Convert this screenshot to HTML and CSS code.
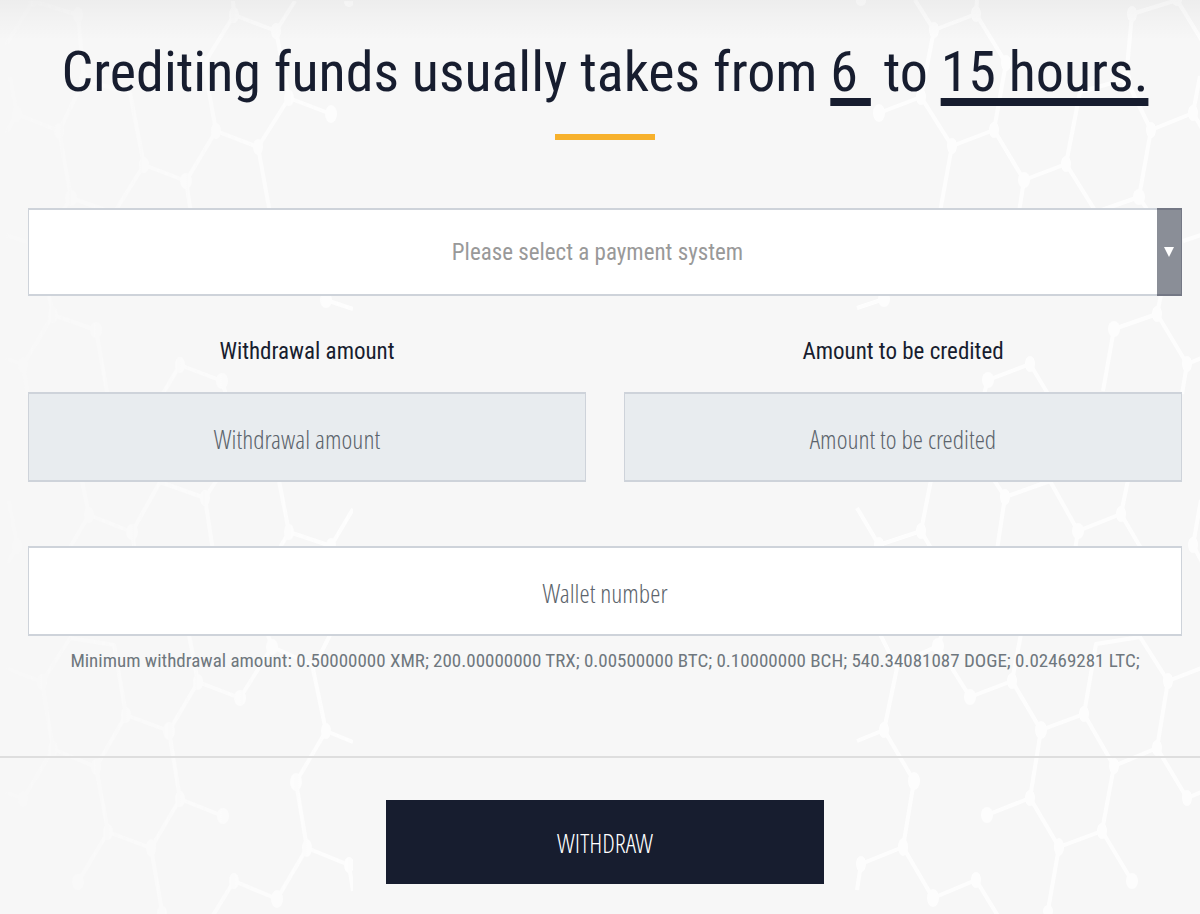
FILE: index.html
```html
<!DOCTYPE html>
<html lang="en">
<head>
<meta charset="utf-8">
<meta name="viewport" content="width=device-width, initial-scale=1">
<title>Withdraw funds</title>
<link rel="stylesheet" href="styles.css">
</head>
<body>
<svg class="backdrop" viewBox="0 0 1200 914" preserveAspectRatio="xMidYMin slice" aria-hidden="true">
  <defs>
    <linearGradient id="fade" x1="857" y1="0" x2="1210" y2="0" gradientUnits="userSpaceOnUse">
      <stop offset="0" stop-color="#fff"/>
      <stop offset="1" stop-color="#fff" stop-opacity="0.1"/>
    </linearGradient>
    <mask id="fade-mask" maskUnits="userSpaceOnUse" x="857" y="0" width="353" height="914">
      <rect x="857" y="0" width="353" height="914" fill="url(#fade)"/>
    </mask>
    <g id="net">
      <path fill="none" stroke="#fff" stroke-width="4" stroke-linejoin="round" d="M915 0L934 30L976 14L977 0M976 14L1006 63L994 130L952 146L921 97L934 30M921 97L879 113M952 146L940 212M994 130L1024 180L1066 164L1080 92L1126 79L1132 14L1177 0L1204 44M1024 180L1019 212M1066 164L1096 212L1139 197L1151 130L1126 79M1151 130L1193 113L1200 76M1193 113L1204 132M1139 197L1150 214M1183 241L1204 234M857 308L884 299M1162 290L1157 314L1114 329L1103 391M1157 314L1187 364L1182 394M1187 364L1204 357M984 394L988 380L1030 364L1048 394M857 508L879 545L921 531L931 480M921 531L932 550M994 480L1005 497L1050 481L1078 531L1121 514L1128 480M1005 497L997 550M1078 531L1075 550M1121 514L1142 550M1201 500L1193 545L1202 562M880 634L897 668L884 730L857 741M884 730L914 781L903 847L861 864L857 890M903 847L933 898L976 880L998 916M897 664L938 646L970 697L1012 681L1021 634M938 646L942 634M1012 681L1041 730L1084 714L1096 644L1140 637L1168 681L1204 667M1041 730L1030 798L987 815M1030 798L1059 847L1102 831L1114 766L1084 714M1114 766L1157 748L1168 681M1157 748L1187 798L1204 791M1059 847L1047 916M1102 831L1132 881"/>
      <g fill="#fff">
        <ellipse cx="861" cy="1" rx="5" ry="5"/><ellipse cx="934" cy="30" rx="5" ry="8"/><ellipse cx="976" cy="14" rx="5" ry="8"/><ellipse cx="1006" cy="63" rx="5" ry="8"/><ellipse cx="921" cy="97" rx="5" ry="8"/><ellipse cx="879" cy="113" rx="6" ry="9"/><ellipse cx="952" cy="146" rx="5" ry="8"/><ellipse cx="994" cy="130" rx="5" ry="8"/><ellipse cx="1024" cy="180" rx="6" ry="8"/><ellipse cx="1066" cy="164" rx="5" ry="8"/><ellipse cx="1126" cy="79" rx="5" ry="8"/><ellipse cx="1132" cy="14" rx="5" ry="8"/><ellipse cx="1177" cy="0" rx="5" ry="6"/><ellipse cx="1151" cy="130" rx="5" ry="8"/><ellipse cx="1193" cy="113" rx="5" ry="8"/><ellipse cx="1139" cy="197" rx="6" ry="8"/>
        <ellipse cx="884" cy="299" rx="6" ry="8"/><ellipse cx="1114" cy="329" rx="6" ry="8"/><ellipse cx="1157" cy="314" rx="5" ry="8"/><ellipse cx="1187" cy="364" rx="5" ry="8"/><ellipse cx="988" cy="380" rx="6" ry="8"/><ellipse cx="1030" cy="364" rx="5" ry="8"/>
        <ellipse cx="879" cy="545" rx="5" ry="8"/><ellipse cx="921" cy="531" rx="5" ry="8"/><ellipse cx="1005" cy="497" rx="5" ry="8"/><ellipse cx="1078" cy="531" rx="6" ry="8"/><ellipse cx="1121" cy="514" rx="5" ry="8"/><ellipse cx="1193" cy="545" rx="5" ry="8"/>
        <ellipse cx="938" cy="646" rx="6" ry="8"/><ellipse cx="970" cy="697" rx="6" ry="8"/><ellipse cx="1012" cy="681" rx="5" ry="8"/><ellipse cx="884" cy="730" rx="5" ry="8"/><ellipse cx="914" cy="781" rx="6" ry="9"/><ellipse cx="903" cy="847" rx="5" ry="9"/><ellipse cx="861" cy="864" rx="5" ry="8"/><ellipse cx="933" cy="898" rx="6" ry="9"/><ellipse cx="976" cy="880" rx="5" ry="8"/><ellipse cx="1041" cy="730" rx="6" ry="9"/><ellipse cx="1084" cy="714" rx="5" ry="8"/><ellipse cx="1168" cy="681" rx="5" ry="8"/><ellipse cx="1114" cy="766" rx="5" ry="8"/><ellipse cx="1157" cy="748" rx="5" ry="8"/><ellipse cx="1030" cy="798" rx="5" ry="8"/><ellipse cx="987" cy="815" rx="6" ry="8"/><ellipse cx="1059" cy="847" rx="5" ry="9"/><ellipse cx="1102" cy="831" rx="5" ry="8"/><ellipse cx="1187" cy="798" rx="5" ry="8"/><ellipse cx="1048" cy="911" rx="5" ry="6"/><ellipse cx="1132" cy="881" rx="6" ry="8"/>
      </g>
    </g>
  </defs>
  <use href="#net" opacity="0.8"/>
  <g transform="matrix(-1 0 0 1 1210 1)" opacity="0.8"><g mask="url(#fade-mask)"><use href="#net"/></g></g>
</svg>
<main class="page">
  <form class="withdraw">
    <div class="body">
      <h1 class="title">Crediting funds usually takes from <u>6&nbsp;</u> to <u>15 hours.</u></h1>
      <div class="accent"></div>
      <div class="select-box">
        <select class="control select" aria-label="Payment system">
          <option>Please select a payment system</option>
        </select>
        <span class="arrow"><svg viewBox="0 0 10 10" width="10" height="10" aria-hidden="true"><path d="M0 0H10L5 10Z" fill="#fff"/></svg></span>
      </div>
      <div class="amounts">
        <div class="field">
          <label class="label" for="amount">Withdrawal amount</label>
          <input class="control amount" id="amount" type="text" placeholder="Withdrawal amount" readonly>
        </div>
        <div class="field">
          <label class="label" for="credited">Amount to be credited</label>
          <input class="control credited" id="credited" type="text" placeholder="Amount to be credited" readonly>
        </div>
      </div>
      <input class="control" type="text" placeholder="Wallet number" aria-label="Wallet number">
      <p class="hint">Minimum withdrawal amount: 0.50000000 XMR; 200.00000000 TRX; 0.00500000 BTC; 0.10000000 BCH; 540.34081087 DOGE; 0.02469281 LTC;</p>
    </div>
    <div class="footer">
      <button class="submit" type="submit">WITHDRAW</button>
    </div>
  </form>
</main>
</body>
</html>
```
FILE: styles.css
```css
* { box-sizing: border-box; }

body {
  margin: 0;
  min-height: 100vh;
  overflow-x: hidden;
  background: #f7f7f7;
  color: #171d2f;
  font-family: "Roboto Condensed", "Liberation Sans", sans-serif;
}

.backdrop {
  position: absolute;
  inset: 0;
  width: 100%;
  height: 100%;
  z-index: -1;
}

.page { background: linear-gradient(rgba(0, 0, 0, 0.04), rgba(0, 0, 0, 0) 40px); }

.body {
  padding: 28px 18px 80px 28px;
  text-align: center;
}

.title {
  margin: 0;
  font-size: 56px;
  font-weight: 400;
  line-height: 88px;
}

.title u {
  text-decoration-thickness: 8px;
  text-underline-offset: 7px;
  text-decoration-skip-ink: none;
}

.accent {
  width: 100px;
  height: 6px;
  margin: 18px auto 68px;
  background: #f7b12c;
}

.control {
  display: block;
  width: 100%;
  height: 90px;
  padding: 4px 12px 0;
  border: solid #ced3da;
  border-width: 2px 1px;
  border-radius: 0;
  background: #fff;
  color: #171d2f;
  font-family: "Open Sans Condensed Light", "Roboto Condensed", "Noto Sans", sans-serif;
  font-size: 26px;
  text-align: center;
}

.control::placeholder { color: #5c646c; opacity: 1; }
.control:read-only:not(.select) { background: #e8ecef; }

.select-box { position: relative; }

.select {
  appearance: none;
  height: 88px;
  padding: 0 27px 0 12px;
  color: #999;
  font-family: inherit;
  font-size: 23px;
  font-weight: 400;
  text-align-last: center;
}

.arrow {
  position: absolute;
  inset: 0 0 0 auto;
  width: 25px;
  display: grid;
  place-items: center;
  background: #8a8e97;
  border: solid #747885;
  border-width: 2px 1px 2px 0;
  pointer-events: none;
}

.amounts {
  display: grid;
  grid-template-columns: 1fr 1fr;
  gap: 38px;
  margin: 36px 0 64px;
}

.label {
  display: block;
  margin-bottom: 20px;
  font-size: 23px;
  line-height: 40px;
}

.amount { padding-right: 32px; }

.hint {
  margin: 10px 0 0;
  color: #6f777e;
  font-size: 19px;
  line-height: 30px;
}

.footer {
  padding: 42px 18px 30px 28px;
  border-top: 2px solid #dedede;
}

.submit {
  display: block;
  width: 38%;
  height: 84px;
  margin: 0 auto;
  padding: 2px 0 0;
  border: 0;
  background: #171d2f;
  color: #fff;
  font-family: "Open Sans Condensed Light", "Roboto Condensed", "Noto Sans", sans-serif;
  font-size: 26px;
}
```
